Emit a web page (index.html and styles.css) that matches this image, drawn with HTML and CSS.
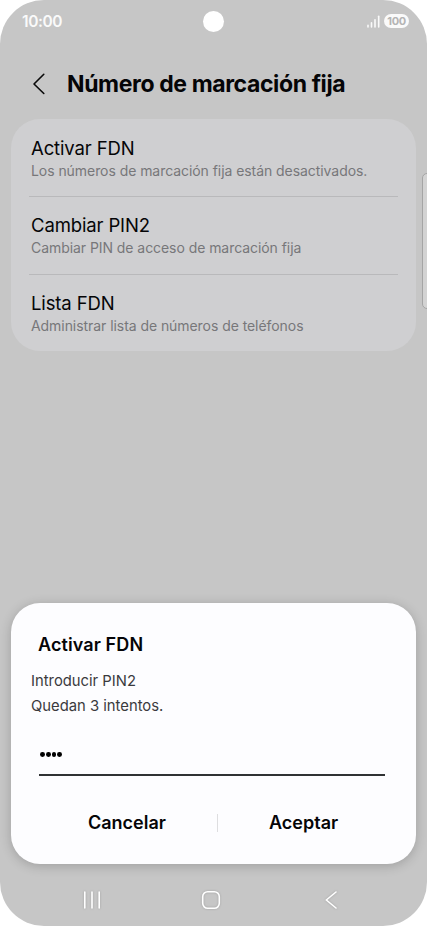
FILE: index.html
```html
<!DOCTYPE html>
<html lang="es">
<head>
<meta charset="utf-8">
<title>Número de marcación fija</title>
<link rel="stylesheet" href="styles.css">
</head>
<body>
<div class="phone">
  <header class="status">
    <span class="clock">10:00</span>
    <span class="camera"></span>
    <span class="indicators">
      <svg width="13" height="13" viewBox="0 0 13 13" fill="none" stroke="#fafafa" stroke-width="1.6" stroke-linecap="round"><path d="M1 10.3v1.7M4.5 7.8V12M8 4.7V12"/><path d="M11.7 1.3V12"/></svg>
      <span class="battery">100</span>
    </span>
  </header>
  <div class="titlebar">
    <svg width="14" height="22" viewBox="0 0 14 22" fill="none" stroke="#0a0a0a" stroke-width="1.6" stroke-linecap="round" stroke-linejoin="round"><path d="M11.8 1.3 2 11l9.8 9.5"/></svg>
    <h1>Número de marcación fija</h1>
  </div>
  <main class="card">
    <div class="row"><h2>Activar FDN</h2><p>Los números de marcación fija están desactivados.</p></div>
    <div class="row"><h2>Cambiar PIN2</h2><p>Cambiar PIN de acceso de marcación fija</p></div>
    <div class="row"><h2>Lista FDN</h2><p>Administrar lista de números de teléfonos</p></div>
  </main>
  <div class="edge"></div>
  <section class="dialog">
    <h3>Activar FDN</h3>
    <p class="prompt">Introducir PIN2</p>
    <p class="tries">Quedan 3 intentos.</p>
    <div class="field"><i></i><i></i><i></i><i></i></div>
    <div class="actions"><span class="cancel">Cancelar</span><span class="split"></span><span class="accept">Aceptar</span></div>
  </section>
  <nav class="nav">
    <svg width="18" height="20" viewBox="0 0 18 20" stroke="#fff" stroke-width="1.6" stroke-linecap="round"><path d="M1.8 2v16M9 2v16M16.2 2v16"/></svg>
    <svg width="20" height="20" viewBox="0 0 20 20" fill="none" stroke="#fff" stroke-width="1.6"><rect x="1.7" y="1.7" width="16.6" height="16.6" rx="5"/></svg>
    <svg width="14" height="20" viewBox="0 0 14 20" fill="none" stroke="#fff" stroke-width="1.6" stroke-linecap="round" stroke-linejoin="round"><path d="M12 2 2.3 10l9.7 8"/></svg>
  </nav>
</div>
</body>
</html>
```
FILE: styles.css
```css
* { box-sizing: border-box; margin: 0; }
body { background: #fff; font-family: Inter, sans-serif; color: #050507; white-space: nowrap; }
.phone { position: relative; width: 427px; height: 926px; display: flex; flex-direction: column; overflow: hidden; background: #c6c6c6; border-radius: 44px; }
.status { height: 42px; display: grid; grid-template-columns: 1fr 21px 1fr; align-items: center; padding: 0 18px 0 22px; color: #fafafa; }
.clock { font-size: 15.5px; font-weight: 600; letter-spacing: -0.4px; }
.camera { width: 21px; height: 21px; border-radius: 50%; background: #fff; position: relative; top: 0.5px; left: -2px; }
.indicators { display: flex; justify-content: flex-end; align-items: center; gap: 4px; }
.battery { width: 25px; height: 14px; border-radius: 7px; background: #fafafa; color: #b4b4b4; font-size: 11px; line-height: 14px; font-weight: 700; text-align: center; letter-spacing: -0.4px; }
.titlebar { height: 77px; display: flex; align-items: center; padding: 6px 0 0 32px; gap: 21px; }
h1 { font-size: 23px; font-weight: 700; line-height: 28px; letter-spacing: -0.39px; padding-top: 1px; }
.card { width: 405px; height: 232px; margin-left: 11px; background: #cfcfd1; border-radius: 29px; padding: 0 18px; }
.row { height: 78px; padding: 17px 2px 0; border-bottom: 1px solid #b9b9bb; }
.row + .row { padding-top: 16px; }
.row:last-child { border: 0; }
h2 { font-size: 18.5px; line-height: 24px; font-weight: 400; letter-spacing: -0.13px; }
.row p { font-size: 14px; line-height: 20px; margin-top: 1px; color: #77777a; letter-spacing: -0.06px; }
.edge { position: absolute; left: 422px; top: 173px; width: 12px; height: 136px; border: 1px solid #a5a5a5; border-radius: 5px; background: #d3d3d3; }
.dialog { width: 405px; height: 261px; margin: 252px 0 0 11px; padding: 30px 20px 0; background: #fdfdff; border-radius: 29px; box-shadow: 0 2px 12px rgba(0,0,0,.2); }
h3 { font-size: 18px; line-height: 24px; font-weight: 600; margin-left: 7px; letter-spacing: 0.1px; }
.dialog p { font-size: 14.8px; line-height: 25px; color: #3a3a3d; }
.dialog .prompt { margin-top: 12px; }
.field { width: 346px; height: 57px; margin-left: 8px; border-bottom: 2px solid #303234; display: flex; gap: 1px; padding: 33px 0 0 1px; }
.field i { width: 4.8px; height: 4.8px; border-radius: 50%; background: #000; }
.actions { display: grid; grid-template-columns: 1fr 1px 1fr; align-items: center; height: 24px; margin-top: 35px; font-size: 18px; font-weight: 600; line-height: 24px; }
.split { height: 18px; background: #dedee0; position: relative; left: 4px; }
.cancel { padding-left: 57px; }
.accept { padding-left: 55px; }
.nav { display: flex; height: 20px; margin: 26px 0 0 83px; }
.nav svg { filter: drop-shadow(0 0 1px rgba(0,0,0,.2)); }
.nav svg + svg { margin-left: 100px; }
.nav svg:last-child { margin-left: 103px; }
```
